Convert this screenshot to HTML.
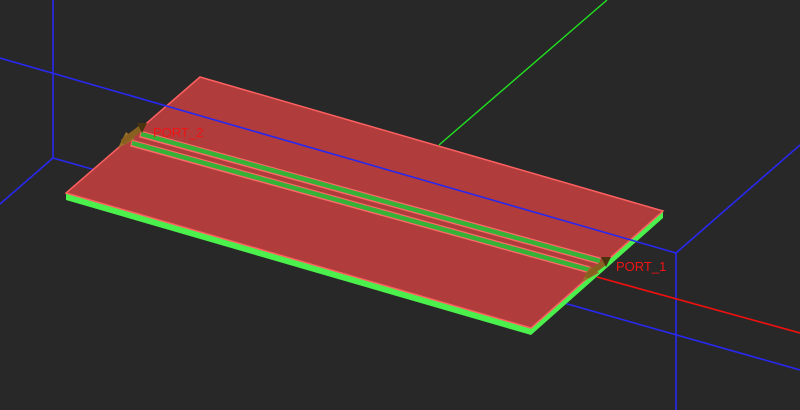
<!DOCTYPE html>
<html><head><style>
html,body{margin:0;padding:0;background:#282828;overflow:hidden}
svg{display:block}
text{font-family:"Liberation Sans",sans-serif;font-size:13px;fill:#f01414}
</style></head><body>
<svg width="800" height="410" viewBox="0 0 800 410" xmlns="http://www.w3.org/2000/svg">
<rect width="800" height="410" fill="#282828"/>
<g stroke="#2828f0" stroke-width="1.6" fill="none">
<line x1="53" y1="0" x2="53" y2="158"/>
<line x1="0" y1="204" x2="53" y2="158"/>
<line x1="53" y1="158" x2="800" y2="370"/>
<line x1="676" y1="253" x2="676" y2="410"/>
<line x1="676" y1="253" x2="800" y2="145"/>
</g>
<line x1="607" y1="0" x2="439" y2="145" stroke="#20e020" stroke-width="1.4"/>
<line x1="597" y1="277" x2="800" y2="333" stroke="#f01010" stroke-width="1.6"/>
<polygon points="66,193 531,328 663,211 663,218 531,335 66,200" fill="#4cf04c"/>
<polygon points="200,77 663,211 531,328 66,193" fill="#b03c3c" stroke="#ff6060" stroke-width="1.5"/>
<line x1="140" y1="134" x2="600" y2="261" stroke="#ff6a6a" stroke-width="7"/>
<line x1="141" y1="134" x2="600" y2="261" stroke="#36b236" stroke-width="4.5"/>
<line x1="131" y1="143" x2="590" y2="270" stroke="#ff6a6a" stroke-width="7"/>
<line x1="132" y1="143" x2="590" y2="270" stroke="#36b236" stroke-width="4.5"/>
<line x1="137" y1="138.5" x2="596" y2="265.5" stroke="#b03c3c" stroke-width="2"/>
<line x1="0" y1="58" x2="676" y2="253" stroke="#2828f0" stroke-width="1.6"/>
<g>
<polygon points="118,148 126,132 135,139" fill="#9a7028"/>
<line x1="124" y1="141" x2="141" y2="128" stroke="#8a6020" stroke-width="6" stroke-linecap="round"/>
<polygon points="137,123 147,123 142,133" fill="#4a3410"/>
<polygon points="582,282 590,266 599,273" fill="#9a7028"/>
<line x1="588" y1="275" x2="605" y2="262" stroke="#8a6020" stroke-width="6" stroke-linecap="round"/>
<polygon points="601,257 611,257 606,267" fill="#4a3410"/>
</g>
<text x="153" y="137">PORT_2</text>
<text x="616" y="271">PORT_1</text>
</svg>
</body></html>
